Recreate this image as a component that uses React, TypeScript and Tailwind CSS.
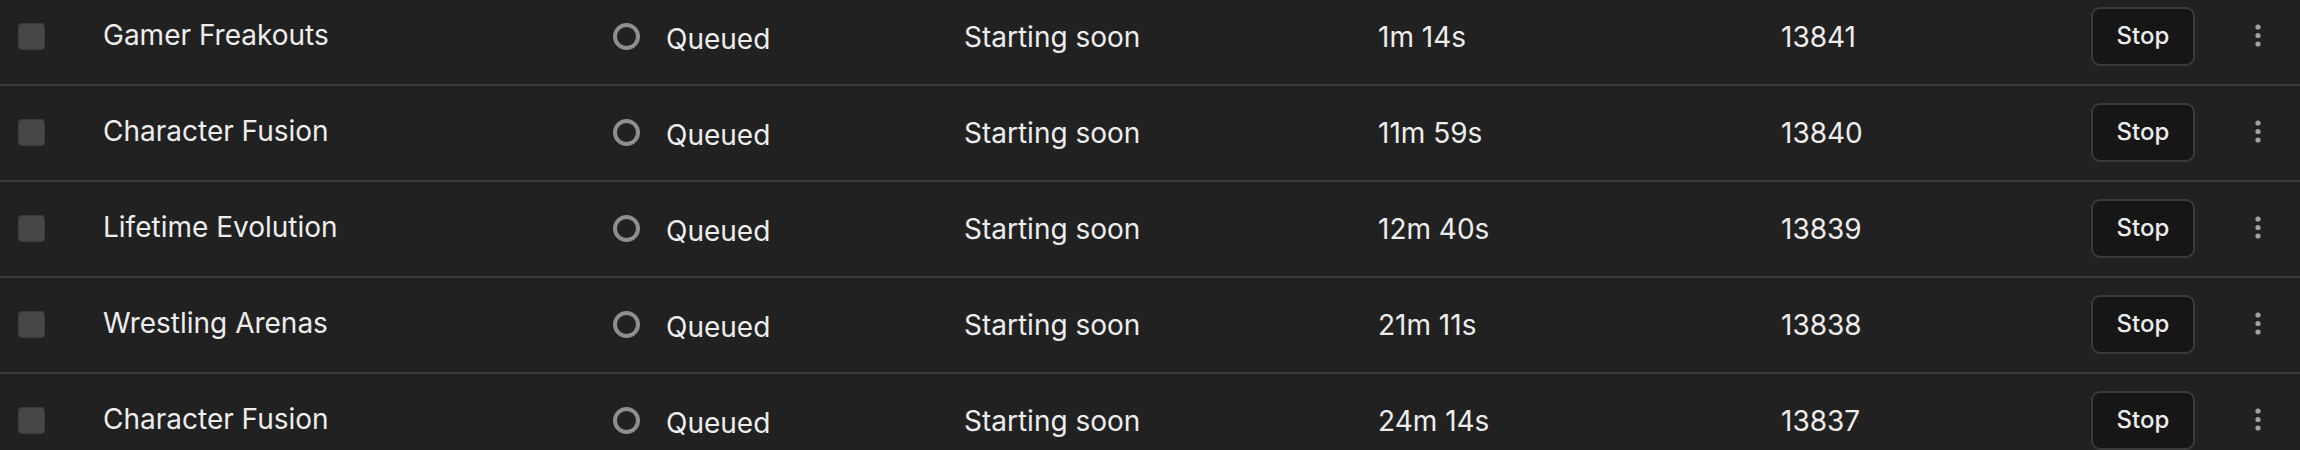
import React from 'react';

interface Job {
  name: string;
  duration: string;
  id: number;
}

const jobs: Job[] = [
  { name: 'Gamer Freakouts', duration: '1m 14s', id: 13841 },
  { name: 'Character Fusion', duration: '11m 59s', id: 13840 },
  { name: 'Lifetime Evolution', duration: '12m 40s', id: 13839 },
  { name: 'Wrestling Arenas', duration: '21m 11s', id: 13838 },
  { name: 'Character Fusion', duration: '24m 14s', id: 13837 },
];

const KebabIcon = () => (
  <svg width="6" height="24" viewBox="0 0 6 24" fill="#a3a3a3">
    <circle cx="3" cy="3" r="2.6" />
    <circle cx="3" cy="11.5" r="2.6" />
    <circle cx="3" cy="20" r="2.6" />
  </svg>
);

const JobRow: React.FC<{ job: Job }> = ({ job }) => {
  return (
    <div className="flex items-center h-[96px] border-b-2 border-[#3a3a3a] pl-[18px] text-[28px] text-[#ededed]">
      <div className="w-[27px] h-[27px] rounded-[4px] bg-[#474747] border border-[#3c3c3c] mb-[2px] shrink-0" />
      <div className="ml-[58px] w-[510px] shrink-0 mb-[5px] whitespace-nowrap">{job.name}</div>
      <div className="w-[351px] shrink-0 flex items-center">
        <div className="w-[27px] h-[27px] rounded-full border-[4px] border-[#8e8e8e] shrink-0 mb-[2px]" />
        <span className="ml-[26px] mt-[4px]">Queued</span>
      </div>
      <div className="w-[414px] shrink-0 whitespace-nowrap">Starting soon</div>
      <div className="w-[403px] shrink-0 whitespace-nowrap">{job.duration}</div>
      <div className="w-[310px] shrink-0">{job.id}</div>
      <button className="w-[104px] h-[59px] shrink-0 mb-[2px] rounded-[9px] border-2 border-[#3a3a3a] bg-[#161616] text-[24px] font-medium text-[#ededed] flex items-center justify-center">
        Stop
      </button>
      <div className="ml-[60px] mb-[2px] flex items-center">
        <KebabIcon />
      </div>
    </div>
  );
};

export default function App() {
  return (
    <div className="w-[2300px] h-[450px] overflow-hidden bg-[#212121]" style={{ fontFamily: 'Inter, "Noto Sans", sans-serif' }}>
      <div className="-mt-[10px]">
        {jobs.map((job, i) => (
          <JobRow key={i} job={job} />
        ))}
      </div>
    </div>
  );
}
